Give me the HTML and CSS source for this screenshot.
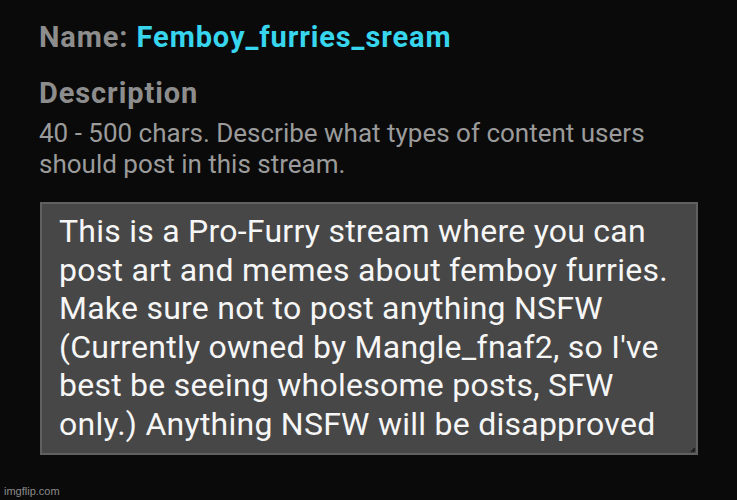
FILE: index.html
```html
<!DOCTYPE html>
<html>
<head>
<meta charset="utf-8">
<link rel="stylesheet" href="styles.css">
</head>
<body>
<main class="page">
  <div class="name-row"><span class="label">Name:</span> <span class="value">Femboy_furries_sream</span></div>
  <h2 class="heading">Description</h2>
  <p class="hint">40 - 500 chars. Describe what types of content users should post in this stream.</p>
  <div class="textarea">
    <p class="ta-text">This is a Pro-Furry stream where you can post art and memes about femboy furries. Make sure not to post anything NSFW (Currently owned by Mangle_fnaf2, so I've best be seeing wholesome posts, SFW only.) Anything NSFW will be disapproved</p>
    <svg class="grip" width="7" height="7" viewBox="0 0 7 7"><path d="M6 2 L2 6 M6 4 L4 6" stroke="#1e1e1e" stroke-width="1.3"/></svg>
  </div>
  <div class="watermark">imgflip.com</div>
</main>
</body>
</html>
```
FILE: styles.css
```css
html, body {
  margin: 0;
  padding: 0;
  background: #0a0a0a;
}
.page {
  width: 737px;
  height: 500px;
  box-sizing: border-box;
  padding: 19px 0 0 39px;
  font-family: Roboto, "Noto Sans", sans-serif;
  position: relative;
}
.name-row {
  font-size: 29px;
  font-weight: 700;
  letter-spacing: 0.9px;
  line-height: 36px;
}
.label { color: #8d8d8d; }
.value { color: #38d5ee; }
.heading {
  margin: 25px 0 0;
  font-size: 29px;
  font-weight: 700;
  letter-spacing: 0.9px;
  color: #8d8d8d;
  line-height: 26px;
}
.hint {
  margin: 12px 0 0;
  width: 650px;
  font-size: 26px;
  line-height: 31px;
  color: #9b9b9b;
}
.textarea {
  margin: 22px 0 0 1px;
  width: 658px;
  height: 253px;
  box-sizing: border-box;
  background: #474747;
  border: 2px solid #606060;
  padding: 8px 10px 0 17px;
  position: relative;
}
.ta-text {
  margin: 0;
  font-size: 32px;
  letter-spacing: 0.25px;
  line-height: 38.5px;
  color: #f6f6f6;
}
.grip {
  position: absolute;
  right: 0;
  bottom: 0;
}
.watermark {
  position: absolute;
  left: 4px;
  bottom: 3px;
  font-size: 11px;
  color: #8a8a8a;
  font-family: "Liberation Sans", Arial, sans-serif;
}
```
